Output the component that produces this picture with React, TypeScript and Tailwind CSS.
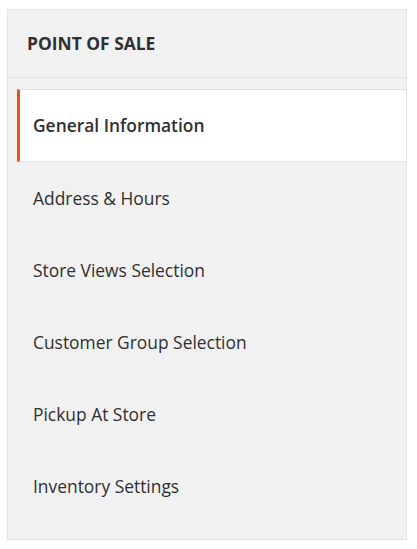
import React from 'react';

const items = [
  'General Information',
  'Address & Hours',
  'Store Views Selection',
  'Customer Group Selection',
  'Pickup At Store',
  'Inventory Settings',
];

export default function App() {
  const active = 0;

  return (
    <div className="min-h-screen bg-white pl-[7px] pt-[9px] font-['Open_Sans',sans-serif]">
      <div className="w-[400px] border border-[#e3e3e3] bg-[#f1f1f1]">
        <div className="flex h-[68px] items-center border-b border-[#e3e3e3] pl-[19px] text-[17.4px] font-bold uppercase text-[#303030]">
          Point of Sale
        </div>
        <ul className="pb-[17px] pl-[9px] pt-[11px]">
          {items.map((label, i) =>
            i === active ? (
              <li
                key={label}
                className="flex h-[73px] items-center border-y border-l-[3px] border-[#e3e3e3] border-l-[#eb5202] bg-white pl-[13px] text-[17.4px] font-semibold text-[#303030]"
              >
                {label}
              </li>
            ) : (
              <li key={label} className="flex h-[72px] items-center pl-[16px] text-[17.4px] text-[#303030]">
                {label}
              </li>
            )
          )}
        </ul>
      </div>
    </div>
  );
}
